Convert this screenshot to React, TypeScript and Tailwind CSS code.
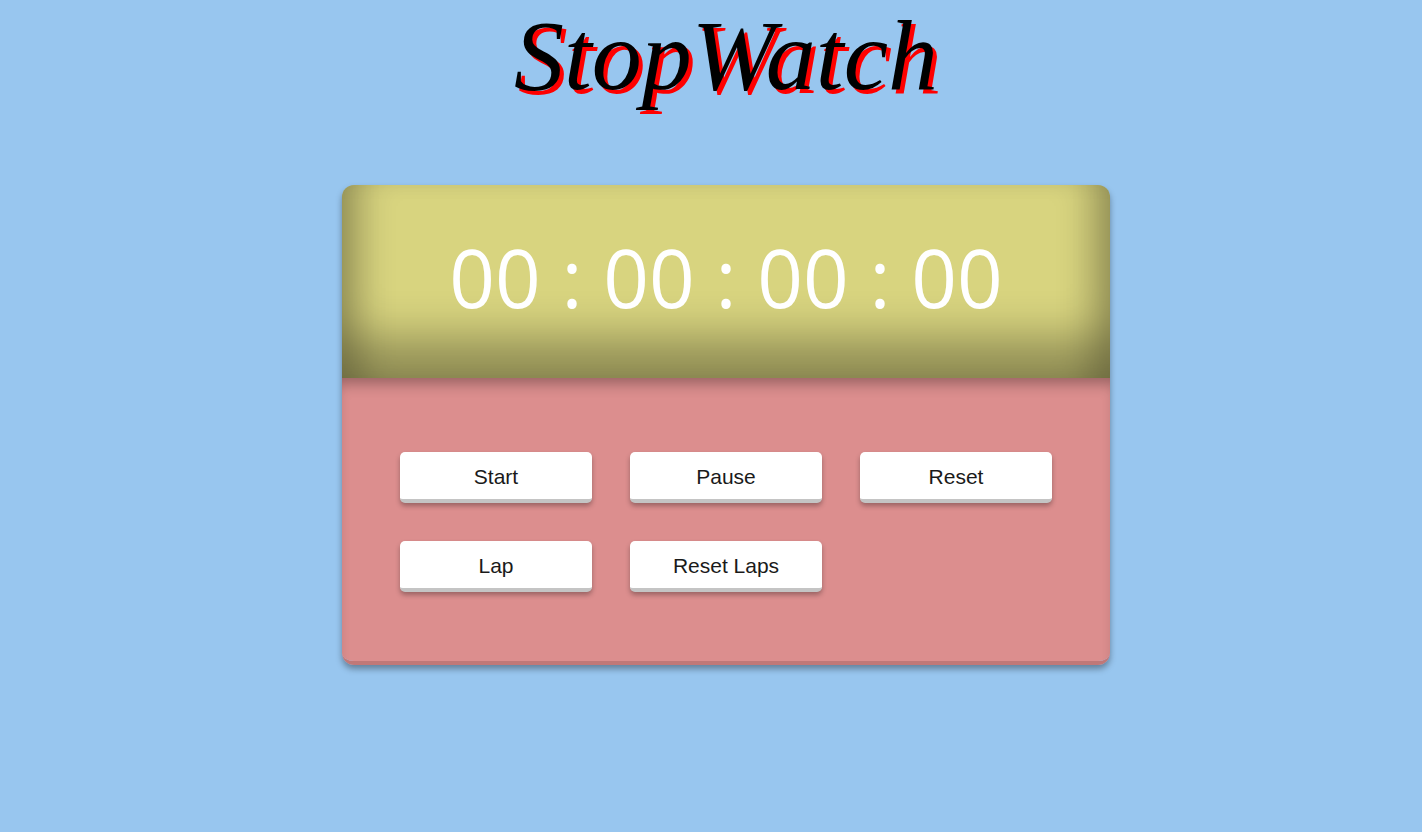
export default function App() {
    const buttons = ["Start", "Pause", "Reset", "Lap", "Reset Laps"];
    return (
        <div className="min-h-[832px] w-full bg-[#98c6ef] pl-[30px]">
            <h1
                className="text-center text-[100px] leading-[112px] italic font-normal text-black [text-shadow:4px_4px_0_#ff0000]"
                style={{ fontFamily: '"Liberation Serif", "Times New Roman", serif' }}
            >
                StopWatch
            </h1>
            <div className="mx-auto mt-[73px] w-[768px] rounded-[12px] overflow-hidden shadow-[0_4px_6px_rgba(0,0,0,0.35)] border-b-[4px] border-[#c07878]">
                <div
                    className="h-[193px] bg-[#d8d47f] flex items-center justify-center text-white text-[80px] shadow-[inset_0_-50px_45px_-10px_rgba(0,0,0,0.33),inset_40px_0_34px_-20px_rgba(0,0,0,0.22),inset_-40px_0_34px_-20px_rgba(0,0,0,0.22)]"
                    style={{ fontFamily: '"Open Sans", "Noto Sans", sans-serif' }}
                >
                    <span className="mt-[-10px]">00 : 00 : 00 : 00</span>
                </div>
                <div className="h-[283px] bg-[#dc8e8e] shadow-[inset_0_12px_14px_-6px_rgba(0,0,0,0.3)] px-[58px] pt-[74px]">
                    <div className="grid grid-cols-[192px_192px_192px] gap-x-[38px] gap-y-[38px]">
                        {buttons.map((b) => (
                            <button
                                key={b}
                                className="h-[51px] pt-[2px] bg-white rounded-[5px] border-b-[4px] border-[#c4c4c4] text-[21px] text-[#1a1a1a] shadow-[0_3px_5px_rgba(0,0,0,0.3)]"
                                style={{ fontFamily: '"Liberation Sans", Arial, sans-serif' }}
                            >
                                {b}
                            </button>
                        ))}
                    </div>
                </div>
            </div>
        </div>
    );
}
